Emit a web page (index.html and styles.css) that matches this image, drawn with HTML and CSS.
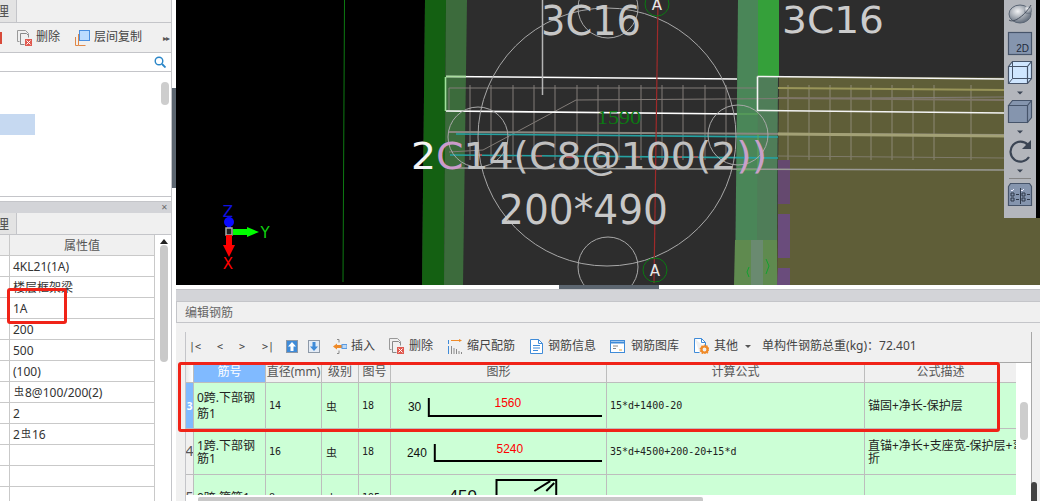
FILE: index.html
```html
<!DOCTYPE html>
<html lang="zh">
<head>
<meta charset="utf-8">
<title>编辑钢筋</title>
<link rel="stylesheet" href="styles.css">
</head>
<body>
<div class="app">
  <aside class="left">
    <section class="side-top">
      <div class="tabs"><span class="tab">理</span></div>
      <div class="side-tools">
        <span class="stub"></span>
        <svg class="ico" width="15" height="16" viewBox="0 0 15 16"><path d="M.5.500h8l3 3v3M.5.500v11h2" fill="none" stroke="#9a9a9a"/><path d="M3.500 3.500h6l2 2v2M3.500 3.500v11h4" fill="none" stroke="#8a8a8a"/><rect x="8" y="9" width="7" height="7" fill="#e05a50"/><path d="M9.500 10.500l4 4m0-4l-4 4" stroke="#fff"/></svg>
        <span class="t1">删除</span>
        <svg class="ico ico-copy" width="15" height="16" viewBox="0 0 15 16"><path d="M3.500 4v11.500h7M.5 7v8.500h3" fill="none" stroke="#e08848"/><rect x="4.500" y=".5" width="10" height="10" fill="#bcdcff" stroke="#4a8fe0"/></svg>
        <span class="t1">层间复制</span>
        <span class="more">▸▸</span>
      </div>
      <div class="search">
        <svg width="12" height="12" viewBox="0 0 12 12"><circle cx="5" cy="5" r="3.800" fill="none" stroke="#2a86c8" stroke-width="1.400"/><path d="M8 8l3.500 3.500" stroke="#2a86c8" stroke-width="1.800"/></svg>
      </div>
      <div class="list">
        <div class="picked"></div>
        <div class="thumb-top"></div>
      </div>
    </section>
    <section class="side-bottom">
      <div class="titlebar"><span class="close">✕</span></div>
      <div class="tabs"><span class="tab">理</span></div>
      <div class="props">
        <div class="prop-table">
          <div class="prop head"><span></span><span class="val">属性值</span></div>
          <div class="prop"><span></span><span>4KL21(1A)</span></div>
          <div class="prop"><span></span><span>楼层框架梁</span></div>
          <div class="prop"><span></span><span>1A</span></div>
          <div class="prop"><span></span><span>200</span></div>
          <div class="prop"><span></span><span>500</span></div>
          <div class="prop"><span></span><span>(100)</span></div>
          <div class="prop"><span></span><span><i class="grade">虫</i>8@100/200(2)</span></div>
          <div class="prop"><span></span><span>2</span></div>
          <div class="prop"><span></span><span>2<i class="grade">虫</i>16</span></div>
          <div class="prop"><span></span><span></span></div>
          <div class="prop"><span></span><span></span></div>
          <div class="prop"><span></span><span></span></div>
        </div>
        <div class="prop-scroll"><span class="up"></span><span class="thumb-prop"></span></div>
      </div>
    </section>
    <div class="mark-left"></div>
  </aside>
  <div class="grip-v"><span></span></div>
  <main class="main">
    <div class="view">
      <svg class="scene" width="864" height="285" viewBox="176 0 864 285">
        <rect x="176" y="0" width="864" height="285" fill="#000"/>
        <path d="M344.500 0L343 282" stroke="#0d7a12" stroke-width="1"/>
        <polygon points="425,0 1040,0 1040,285 422,285" fill="#2d2d2d"/>
        <polygon points="779,76 1040,78 1040,285 777,285" fill="#5f5e38"/>
        <rect x="1036" y="0" width="4" height="218" fill="#000"/>
        <polygon points="778,160 790,160 790,204 778,204" fill="#65496f"/>
        <polygon points="778,214 790,214 790,258 778,258" fill="#6a4c7c"/>
        <polygon points="778,268 790,268 790,285 777,285" fill="#6a4c7c"/>
        <polygon points="425,0 446,0 444,285 422,285" fill="#146012"/>
        <polygon points="446,0 467,0 463,285 444,285" fill="#3c6b3c"/>
        <polygon points="738,0 758,0 758,285 735,285" fill="#4a8658"/>
        <polygon points="758,0 779,0 779,76 758,76" fill="#35a03a"/>
        <polygon points="758,76 778,76 777,240 757,240" fill="#4f7d58"/>
        <polygon points="735,240 777,240 777,285 734,285" fill="#5f8a4f"/>
        <rect x="751" y="240" width="12" height="45" fill="#6a8a70"/>
        <g stroke="#827c78" fill="none">
          <path d="M470 85V160M491 85V160M513 85V160M534 85V160M555 85V160M577 85V160M598 85V160M619 85V160M641 85V160M662 85V160M683 85V160M705 85V160M726 85V160"/>
          <path d="M449 88L758 88M449 110L449 88M483 150L576 100L1004 97"/>
          <path d="M449 132L1004 135" stroke="#8a8780" stroke-width="2"/>
          <path d="M447 168L1004 170" stroke="#9a9a96" stroke-width="1.500"/>
          <path d="M449 152L483 150"/>
        </g>
        <g stroke="#8e8a62" fill="none" stroke-width="1">
          <path d="M788 85V160M809 85V160M830 85V160M851 85V160M871 85V160M892 85V160M913 85V160M934 85V160M971 85V160" stroke="#8d8875"/>
          <path d="M778 88L1004 90" stroke="#99955a" stroke-width="2"/>
          <path d="M778 98L1004 100" stroke="#7f7668" stroke-width="2"/>
          <path d="M778 134L1004 136" stroke="#a3a176" stroke-width="3"/>
          <path d="M778 156L1004 158" stroke="#7f7b6a"/>
        </g>
        <path d="M456 134L778 137" stroke="#25a2a2" stroke-width="1.600"/>
        <path d="M450 155L778 158" stroke="#25a2a2" stroke-width="1.600"/>
        <path d="M476 155H482M517 156H522M536 156H542M566 157H574M636 157H640M678 157H682M694 157H698" stroke="#c84a4a" stroke-width="1.600"/>
        <path d="M446 76.500L737 79" stroke="#fff" stroke-width="1.600"/>
        <path d="M446 111L737 114" stroke="#fff" stroke-width="1.600"/>
        <path d="M445.500 77V111" stroke="#9fe09a" stroke-width="1.600"/>
        <path d="M446 76.500H466" stroke="#a8dc9e" stroke-width="1.600"/>
        <path d="M737 114H758M758 134v36H737" stroke="#5faa5a" fill="none"/>
        <path d="M757.500 76.500L1004 79M757.500 76.500V110.500L1004 113" stroke="#f4f4f4" stroke-width="1.600" fill="none"/>
        <path d="M542.500 0V95" stroke="#b4b4b4" stroke-width="1.500"/>
        <g fill="none" stroke="#a8a8a8">
          <circle cx="607" cy="137" r="129"/>
          <circle cx="608" cy="8" r="30"/>
          <circle cx="608" cy="267" r="30"/>
          <circle cx="478" cy="137" r="30"/>
          <circle cx="738" cy="135" r="30"/>
        </g>
        <path d="M658 0L654 283" stroke="#a02a2a" stroke-width="1.200"/>
        <circle cx="657" cy="4" r="12" fill="none" stroke="#0a7a12"/>
        <circle cx="655" cy="270" r="12" fill="none" stroke="#0a7a12"/>
        <text class="lbl" x="657" y="10" text-anchor="middle" font-size="15" fill="#e8e8e8">A</text>
        <text class="lbl" x="655" y="276" text-anchor="middle" font-size="15" fill="#e8e8e8">A</text>
        <text class="lbl" x="541" y="35" font-size="40" fill="#c6c6c6" textLength="100" lengthAdjust="spacingAndGlyphs">3C16</text>
        <text class="lbl" x="782" y="33" font-size="38" fill="#cccccc" textLength="102" lengthAdjust="spacingAndGlyphs">3C16</text>
        <text class="lbl" x="411" y="169" font-size="37" fill="#c0c0c0" textLength="356" lengthAdjust="spacingAndGlyphs"><tspan fill="#f4f4f4">2</tspan><tspan fill="#cc9bcc">C</tspan>14(C8@100(2<tspan fill="#c9a0c9">))</tspan></text>
        <text class="lbl" x="499" y="224" font-size="40" fill="#c8c8c8" textLength="169" lengthAdjust="spacingAndGlyphs">200*490</text>
        <text x="597" y="124" font-family="Liberation Serif, serif" font-size="19" fill="#0a7a12" textLength="44" lengthAdjust="spacingAndGlyphs">1590</text>
        <path d="M749 267l-2 5 2 5M766 259l3 7-3 8" fill="none" stroke="#12a030" stroke-width="1"/>
        <g>
          <circle cx="229" cy="222" r="5" fill="#0a0aff"/>
          <path d="M229 222V230" stroke="#0a0aff" stroke-width="4"/>
          <rect x="226" y="228" width="6" height="7" fill="#222" stroke="#aaa" stroke-width="1.500"/>
          <path d="M233 232H247" stroke="#0f0" stroke-width="6"/>
          <path d="M247 227L259 232L247 237Z" fill="#0f0"/>
          <path d="M229 235V248" stroke="#f00" stroke-width="6"/>
          <path d="M223 245H235L229 257Z" fill="#f00"/>
          <text class="lbl" x="228" y="217" text-anchor="middle" font-size="15" fill="#1010e0">Z</text>
          <text class="lbl" x="265" y="238" text-anchor="middle" font-size="15" fill="#0fd40f">Y</text>
          <text class="lbl" x="228" y="269" text-anchor="middle" font-size="15" fill="#f00">X</text>
        </g>
      </svg>
      <div class="tool3d">
        <svg width="32" height="218" viewBox="0 0 32 218">
          <defs><radialGradient id="ball" cx=".4" cy=".35" r=".7"><stop offset="0" stop-color="#f2f3f5"/><stop offset="1" stop-color="#5b6675"/></radialGradient></defs>
          <ellipse cx="16" cy="14" rx="11" ry="9" fill="url(#ball)" stroke="#5b6675"/>
          <circle cx="24" cy="10" r="4" fill="url(#ball)"/>
          <path d="M5 20C10 24 22 14 27 5" fill="none" stroke="#47505e"/>
          <rect x="4.500" y="32.500" width="23" height="22" fill="#8595ae" stroke="#46546a" stroke-width="1.200"/>
          <text x="25" y="52" text-anchor="end" class="d2">2D</text>
          <path d="M4.500 66.500h19v17h-19zM4.500 66.500l4-5h19v17l-4 5M23.500 66.500l4-5" fill="#cfe6ff" stroke="#46546a" stroke-width="1.200"/>
          <path d="M8.500 61.500v17h19M8.500 78.500l-4 5" fill="none" stroke="#46546a"/>
          <path d="M13 91.500h6l-3 3z" fill="#3b4554"/>
          <path d="M4.500 105.500l4-5h19v17l-4 5zM23.500 105.500l4-5" fill="#8595ae" stroke="#46546a" stroke-width="1.200"/>
          <path d="M4.500 105.500h19v17h-19z" fill="#8595ae" stroke="#46546a" stroke-width="1.200"/>
          <path d="M13 130.500h6l-3 3z" fill="#3b4554"/>
          <path d="M24 145A10 10 0 1 0 25 157" fill="none" stroke="#3b4554" stroke-width="2.200"/>
          <path d="M27 140v9h-9z" fill="#3b4554"/>
          <path d="M13 169.500h6l-3 3z" fill="#3b4554"/>
          <path d="M5 178.500H27" stroke="#858585"/>
          <path d="M4.500 186.500l2-3h19l2 3v19h-23z" fill="#8595ae" stroke="#46546a" stroke-width="1.200"/>
          <path d="M7 190l1 1 2-2M17 190l1 1 2-2" fill="none" stroke="#eef"/>
          <path d="M7 193h3v3H7zM7 198h3v3H7zM18 193h3v3h-3zM18 198h3v3h-3zM12 194.500h3M12 199.500h3M23 194.500h3M23 199.500h3M16.500 188v16" fill="none" stroke="#2e3848"/>
        </svg>
      </div>
    </div>
    <div class="grip-h"><span></span></div>
    <section class="panel">
      <div class="titlebar"></div>
      <div class="panel-tab">编辑钢筋</div>
      <div class="panel-body">
        <div class="toolbar">
          <span class="nav first">|&lt;</span><span class="nav">&lt;</span><span class="nav">&gt;</span><span class="nav last">&gt;|</span>
          <svg class="b-up" width="12" height="13" viewBox="0 0 12 13"><rect width="12" height="13" fill="#8d99a8"/><rect x="1" y="1" width="10" height="11" fill="#3f8bd8"/><path d="M6 2L10 6.500H7.500V11h-3V6.500H2z" fill="#fff"/></svg>
          <svg class="b-down" width="12" height="13" viewBox="0 0 12 13"><rect width="12" height="13" fill="#8d99a8"/><rect x="1" y="1" width="10" height="11" fill="#e4ecf6"/><path d="M6 11L10 6.500H7.500V2h-3v4.500H2z" fill="#3f8bd8"/></svg>
          <svg class="b-ins" width="14" height="15" viewBox="0 0 14 15"><path d="M4 .5h2v3M4 14.500h2v-3" fill="none" stroke="#8a8a8a"/><path d="M0 7.500L4 4.500V6h5v3H4v1.500z" fill="#ef8a28"/><rect x="9" y="5.500" width="5" height="4" fill="#bcd8f4" stroke="#5a9ae0"/></svg>
          <span class="lb">插入</span>
          <svg class="b-del" width="15" height="16" viewBox="0 0 15 16"><path d="M.5.500h8l3 3v3M.5.500v11h2" fill="none" stroke="#9a9a9a"/><path d="M3.500 3.500h6l2 2v2M3.500 3.500v11h4" fill="none" stroke="#8a8a8a"/><rect x="8" y="9" width="7" height="7" fill="#e05a50"/><path d="M9.500 10.500l4 4m0-4l-4 4" stroke="#fff"/></svg>
          <span class="lb">删除</span>
          <svg class="b-scale" width="14" height="15" viewBox="0 0 14 15"><path d="M3 1.500h8" stroke="#ef8a28"/><path d="M11 0l3 1.500-3 1.500z" fill="#ef8a28"/><path d="M.5 1v4M.5 7v8" stroke="#3f8bd8"/><path d="M3.500 7v8M6 9v6M8.500 10v5M11 12v3M13.500 13v2" stroke="#8a8a8a"/></svg>
          <span class="lb">缩尺配筋</span>
          <svg class="b-info" width="13" height="15" viewBox="0 0 13 15"><path d="M.5.500h8l4 4v10H.5z" fill="#fff" stroke="#3f8bd8"/><path d="M8.500.500v4h4M3 6.500h7M3 9h7M3 11.500h5" fill="none" stroke="#3f8bd8"/></svg>
          <span class="lb">钢筋信息</span>
          <svg class="b-lib" width="15" height="13" viewBox="0 0 15 13"><rect x=".5" y=".5" width="14" height="12" fill="#fff" stroke="#3f8bd8"/><path d="M1 1.500h13v2H1z" fill="#3f8bd8"/><path d="M3 6h5M3 8.500h3" stroke="#8a8a8a"/><path d="M9 10h3" stroke="#e0a040"/></svg>
          <span class="lb">钢筋图库</span>
          <svg class="b-oth" width="15" height="16" viewBox="0 0 15 16"><path d="M.5.500h7l4 4v5M.5.500v14h5" fill="#fff" stroke="#3f8bd8"/><path d="M7.500.500v4h4" fill="none" stroke="#3f8bd8"/><circle cx="10.500" cy="11.500" r="3" fill="none" stroke="#ef8a28" stroke-width="2.200"/><circle cx="10.500" cy="11.500" r="4.300" fill="none" stroke="#ef8a28" stroke-width="1.200" stroke-dasharray="1.500 1.200"/></svg>
          <span class="lb">其他</span>
          <span class="caret"></span>
          <span class="weight">单构件钢筋总重(kg)：72.401</span>
        </div>
        <div class="grid-wrap">
          <div class="grid-clip">
            <div class="row hd">
              <span class="rh"></span><span class="c on">筋号</span><span class="c">直径(mm)</span><span class="c">级别</span><span class="c">图号</span><span class="c">图形</span><span class="c">计算公式</span><span class="c">公式描述</span>
            </div>
            <div class="row">
              <span class="rh act">3</span><span class="c name">0跨.下部钢筋1</span><span class="c num">14</span><span class="c num g">虫</span><span class="c num">18</span>
              <span class="c fig">
                <svg width="216" height="45" viewBox="0 0 216 45"><text class="dim" x="17" y="28">30</text><path d="M38 15V33H212" fill="none" stroke="#000" stroke-width="2"/><text class="dim red" x="104" y="24">1560</text></svg>
              </span>
              <span class="c mono">15*d+1400-20</span><span class="c desc">锚固+净长-保护层</span>
            </div>
            <div class="row">
              <span class="rh big">4</span><span class="c name tight">1跨.下部钢筋1</span><span class="c num">16</span><span class="c num g">虫</span><span class="c num">18</span>
              <span class="c fig">
                <svg width="216" height="45" viewBox="0 0 216 45"><text class="dim" x="16" y="28">240</text><path d="M44 15V32H212" fill="none" stroke="#000" stroke-width="2"/><text class="dim red" x="106" y="24">5240</text></svg>
              </span>
              <span class="c mono">35*d+4500+200-20+15*d</span><span class="c desc tight"><span>直锚+净长+支座宽-保护层+弯<br>折</span></span>
            </div>
            <div class="row">
              <span class="rh big">5</span><span class="c name">0跨.箍筋1</span><span class="c num">8</span><span class="c num g">虫</span><span class="c num">195</span>
              <span class="c fig">
                <svg width="216" height="45" viewBox="0 0 216 45"><text class="dim large" x="58" y="27">450</text><path d="M106 21V5H166V21M144 16l16-10M156 16l8-8" fill="none" stroke="#000" stroke-width="2"/></svg>
              </span>
              <span class="c mono low">2*((200-2*20)+(490-2*20))*2+2*(10.57*d)</span><span class="c"></span>
            </div>
          </div>
          <div class="vscroll"><span></span></div>
        </div>
        <div class="hscroll"><span></span></div>
      </div>
      <div class="mark-main"></div>
      <div class="outer-thumb"></div>
    </section>
  </main>
</div>
</body>
</html>
```

FILE: styles.css
```css
* { box-sizing: border-box; }
html, body { margin: 0; padding: 0; height: 501px; overflow: hidden; background: #fff; }
body { font: 12px/1.2 "Noto Sans", "Noto Sans CJK SC", sans-serif; color: #333; }
i { font-style: normal; }

.app { display: flex; width: 1040px; height: 501px; }

/* left column */
.left { position: relative; width: 172px; flex: none; border-right: 1px solid #c4c5c9; }
.side-top { height: 197px; display: flex; flex-direction: column; border-bottom: 1px solid #c4c5c9; }
.tabs { height: 23px; background: #f0f0f0; border-bottom: 1px solid #c4c5c9; flex: none; display: flex; }
.tab { width: 17px; background: #e3e3e3; border-right: 1px solid #c4c5c9; padding-right: 7px; line-height: 22px; color: #555; overflow: hidden; direction: rtl; white-space: nowrap; font-size: 14px; }
.side-tools { height: 30px; background: #f0f0f0; border-bottom: 1px solid #c4c5c9; display: flex; align-items: center; flex: none; white-space: nowrap; }
.side-tools > * { flex: none; }
.stub { width: 2px; height: 12px; background: #d84a3a; margin-right: 15px; }
.t1 { color: #444; margin-left: 4px; }
.ico-copy { margin-left: 15px; }
.more { margin-left: 21px; font-size: 8px; letter-spacing: -1px; color: #555; }
.search { height: 19px; background: #fff; border-bottom: 1px solid #c4c5c9; display: flex; justify-content: flex-end; align-items: center; padding-right: 5px; flex: none; }
.list { flex: 1; position: relative; background: #fff; padding-top: 42px; }
.picked { width: 35px; height: 21px; background: #c6d9f1; }
.thumb-top { position: absolute; left: 161px; top: 10px; width: 8px; height: 23px; border-radius: 4px; background: #cdcdcd; }

.side-bottom { margin-top: 4px; border-top: 1px solid #c4c5c9; height: 300px; display: flex; flex-direction: column; }
.titlebar { height: 11px; background: #d3d4d8; position: relative; flex: none; }
.close { position: absolute; right: 3px; top: -1px; font-size: 8px; line-height: 12px; color: #6a6a6a; }
.side-bottom .tabs { height: 22px; }
.props { flex: 1; display: flex; background: #fff; min-height: 0; }
.prop-table { width: 155px; flex: none; }
.prop { display: grid; grid-template-columns: 10px 145px; height: 21px; }
.prop span { border-right: 1px solid #c9c9c9; border-bottom: 1px solid #c9c9c9; padding-left: 3px; line-height: 22px; color: #333; white-space: nowrap; overflow: hidden; }
.prop.head { height: 21px; background: #f0f0f0; }
.prop .val { text-align: center; color: #555; padding-left: 0; }
.grade { font-size: 10px; position: relative; top: -2px; margin: 0 1px; }
.prop-scroll { flex: 1; position: relative; }
.up { position: absolute; left: 5px; top: 4px; width: 0; height: 0; border: 4px solid transparent; border-top: 0; border-bottom: 5px solid #222; }
.thumb-prop { position: absolute; left: 5px; top: 10px; width: 8px; height: 117px; border-radius: 4px; background: #c9c9c9; }
.mark-left { position: absolute; left: 7px; top: 288px; width: 60px; height: 36px; border: 3px solid #f02318; border-radius: 3px; }

.grip-v { width: 4px; flex: none; background: #fff; padding-top: 88px; }
.grip-v span { display: block; height: 100px; background: #5c6670; }

/* main */
.main { flex: 1; display: flex; flex-direction: column; min-width: 0; }
.view { position: relative; height: 285px; flex: none; overflow: hidden; }
.scene { display: block; }
.lbl { font-family: "DejaVu Sans", sans-serif; }
.tool3d { position: absolute; left: 828px; top: 0; width: 32px; height: 218px; background: #b3b6bc; }
.tool3d svg { display: block; }
.d2 { font: 10px "Liberation Sans", sans-serif; fill: #1e2a3c; }
.grip-h { height: 4px; background: #fff; flex: none; padding-left: 383px; }
.grip-h span { display: block; width: 100px; height: 4px; background: #5c6670; }

.panel { position: relative; flex: 1; display: flex; flex-direction: column; border-top: 1px solid #c4c5c9; background: #f0f0f0; min-height: 0; }
.panel-tab { height: 22px; flex: none; background: #f0f0f0; border-top: 1px solid #c4c5c9; border-bottom: 1px solid #c4c5c9; border-left: 1px solid #c4c5c9; padding-left: 8px; line-height: 21px; color: #666; }
.panel-body { flex: 1; min-height: 0; margin-left: 9px; margin-right: 8px; border-left: 1px solid #c4c5c9; display: flex; flex-direction: column; border-right: 1px solid #a8a8a8; margin-top: 9px; }
.toolbar { height: 30px; flex: none; display: flex; align-items: center; color: #444; white-space: nowrap; padding-bottom: 2px; }
.toolbar > * { flex: none; }
.nav { font: 10px "DejaVu Sans Mono", monospace; color: #444; width: 22px; text-align: center; }
.nav.first { margin-left: 3px; width: 20px; text-align: left; }
.nav.last { width: 16px; text-align: right; margin-left: 5px; }
.b-up { margin-left: 12px; }
.b-down { margin-left: 10px; }
.b-ins { margin-left: 13px; }
.lb { margin-left: 4px; }
.b-del { margin-left: 14px; }
.b-del + .lb { margin-left: 5px; }
.b-scale { margin-left: 15px; }
.b-scale + .lb { margin-left: 5px; }
.b-info { margin-left: 15px; }
.b-info + .lb { margin-left: 5px; }
.b-lib { margin-left: 14px; }
.b-lib + .lb { margin-left: 6px; }
.b-oth { margin-left: 15px; }
.b-oth + .lb { margin-left: 5px; }
.caret { width: 0; height: 0; margin-left: 7px; border: 3px solid transparent; border-bottom: 0; border-top: 3px solid #555; }
.weight { margin-left: 11px; width: 160px; }

.grid-wrap { flex: 1; display: flex; min-height: 0; border-top: 1px solid #a8a8a8; background: #fff; }
.grid-clip { width: 830px; flex: none; overflow: hidden; }
.row { display: grid; grid-template-columns: 8px 72px 56px 37px 32px 216px 258px 152px; height: 46px; }
.row.hd { height: 20px; background: #f0f0f0; }
.rh { background: #f0f0f0; border-right: 1px solid #bdbdbd; border-bottom: 1px solid #bdbdbd; overflow: hidden; display: flex; align-items: center; justify-content: center; color: #555; }
.row.hd .rh { background: linear-gradient(90deg, #e8e8e8, #fff); }
.rh.act { background: #80baff; color: #fff; font-size: 10px; font-weight: 700; }
.rh.big { font-size: 14px; }
.c { background: #ccffd6; border-right: 1px solid #bdbdbd; border-bottom: 1px solid #bdbdbd; display: flex; align-items: center; padding-left: 3px; color: #222; overflow: hidden; }
.row.hd .c { background: #f0f0f0; justify-content: center; padding: 0; color: #555; font-size: 12px; }
.row.hd .c.on { background: #80baff; color: #fff; }
.name { padding-right: 8px; line-height: 16px; }
.name.tight, .tight { line-height: 13px; }
.num { font: 10px "DejaVu Sans Mono", monospace; padding-left: 3px; }
.num.g { font: 11px "Noto Sans CJK SC", sans-serif; padding-left: 4px; }
.fig { padding: 0; }
.fig svg { display: block; }
.dim { font: 12px "Liberation Sans", sans-serif; fill: #111; }
.dim.red { fill: #f00; }
.dim.large { font-size: 17px; }
.mono { font: 10px "DejaVu Sans Mono", monospace; white-space: nowrap; }
.low { align-items: flex-end; padding-bottom: 3px; }
.desc { line-height: 15px; padding-right: 0; white-space: nowrap; }
.desc.tight { line-height: 13px; }
.vscroll { flex: 1; position: relative; background: #fff; }
.vscroll span { position: absolute; left: 4px; top: 39px; width: 8px; height: 38px; border-radius: 4px; background: #cdcdcd; }
.hscroll { height: 6px; flex: none; background: #fff; padding: 2px 0 0 12px; position: relative; }
.hscroll span { display: block; width: 505px; height: 4px; background: #c8c8c8; border-radius: 2px 2px 0 0; }
.mark-main { position: absolute; left: 2px; top: 72px; width: 822px; height: 70px; border: 3px solid #f02318; border-radius: 3px; pointer-events: none; }
.outer-thumb { position: absolute; left: 855px; top: 192px; width: 6px; height: 20px; background: #444; border-radius: 3px 3px 0 0; }
```
